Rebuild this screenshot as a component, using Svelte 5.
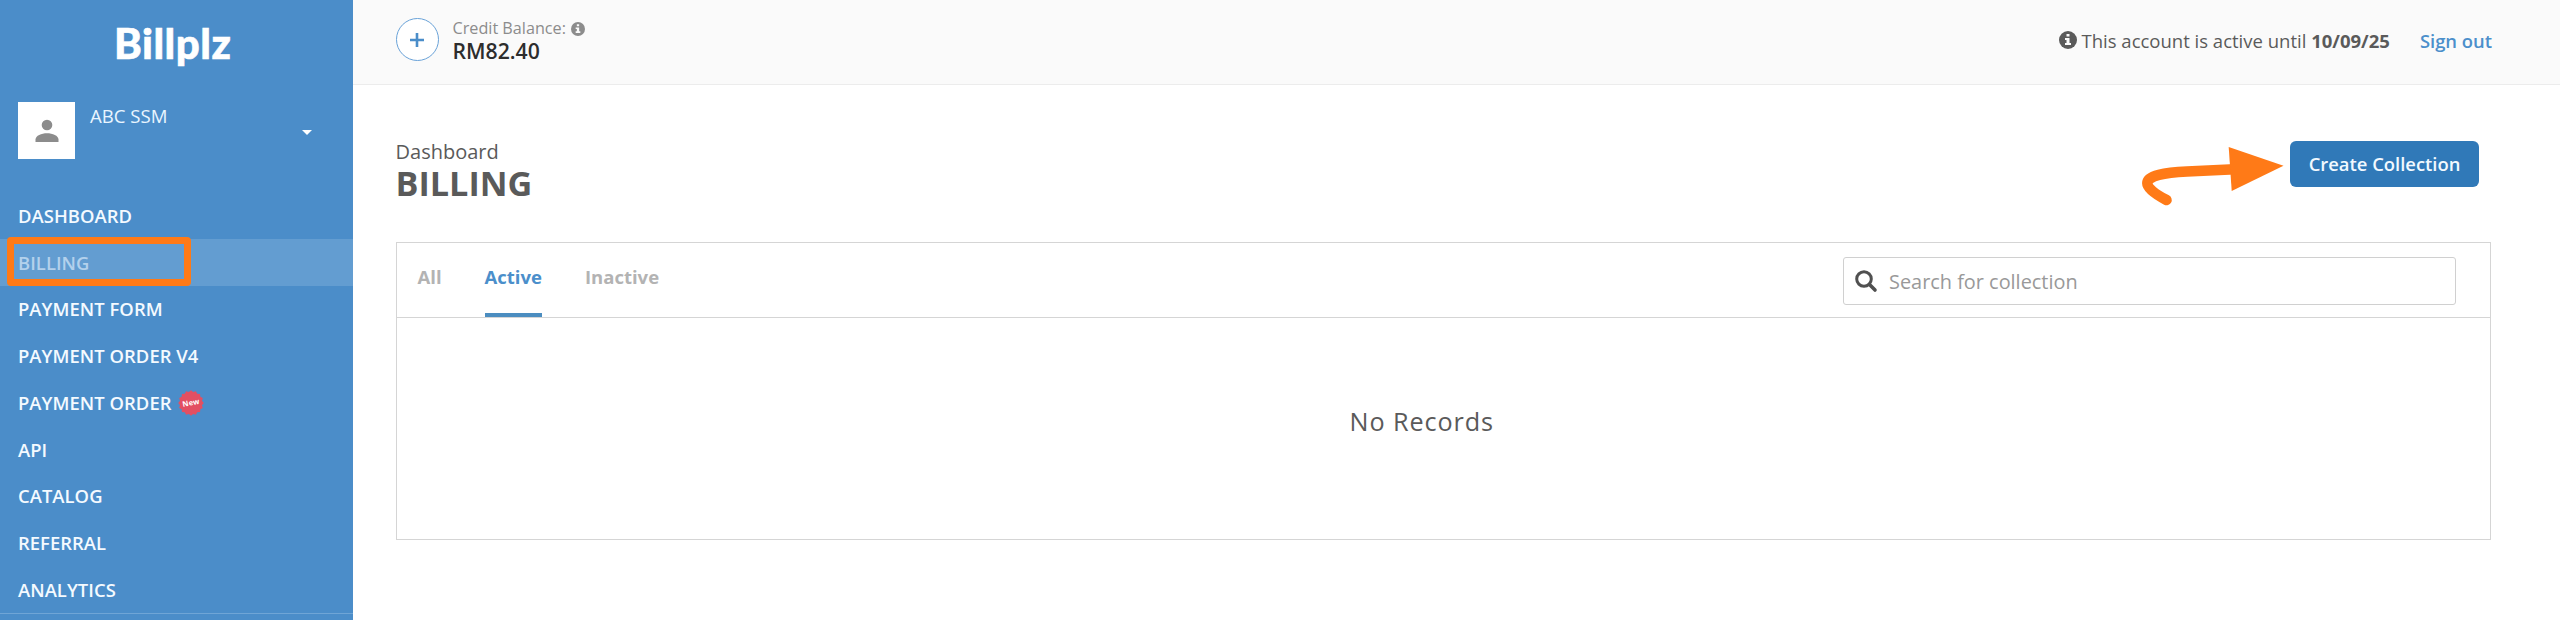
<script>
  const links = [
    { label: 'DASHBOARD' },
    { label: 'BILLING', active: true },
    { label: 'PAYMENT FORM' },
    { label: 'PAYMENT ORDER V4' },
    { label: 'PAYMENT ORDER', isNew: true },
    { label: 'API' },
    { label: 'CATALOG' },
    { label: 'REFERRAL' },
    { label: 'ANALYTICS' }
  ];
  const tabs = ['All', 'Active', 'Inactive'];
  let current = $state('Active');

  // Sixteen-toothed outline of the "New" seal
  const seal = Array.from({ length: 32 }, (_, i) => {
    const r = i % 2 ? 11.2 : 12.8;
    const a = (i * Math.PI) / 16;
    return `${(13 + r * Math.cos(a)).toFixed(2)},${(13 + r * Math.sin(a)).toFixed(2)}`;
  }).join(' ');
</script>

{#snippet info(size)}
  <svg class="info" width={size} height={size} viewBox="0 0 18 18">
    <circle cx="9" cy="9" r="9" fill="currentColor" />
    <path d="M7.500 3h3v2.400h-3zM6 7h4.500v5H12v2H6v-2h1.500V9H6z" fill="#fafafa" />
  </svg>
{/snippet}

<div class="app">
  <aside>
    <div class="logo">Billplz</div>
    <div class="profile">
      <div class="avatar">
        <svg width="24" height="24" viewBox="0 0 24 24" fill="#8c8c8c">
          <circle cx="12" cy="6" r="5.300" />
          <path d="M.5 23v-2.400C.5 16.500 6.500 14.200 12 14.200s11.500 2.300 11.500 6.400V23z" />
        </svg>
      </div>
      <span class="name">ABC SSM</span>
      <span class="caret"></span>
    </div>
    <nav>
      {#each links as link}
        <a href="#top" class:active={link.active}>
          <span>{link.label}</span>
          {#if link.isNew}
            <svg class="seal" width="26" height="26" viewBox="0 0 26 26">
              <polygon points={seal} fill="#e34f62" />
              <text x="13" y="15.400" text-anchor="middle" transform="rotate(-12 13 13)">New</text>
            </svg>
          {/if}
          {#if link.active}<i class="marker"></i>{/if}
        </a>
      {/each}
    </nav>
    <div class="rule"></div>
  </aside>

  <div class="content">
    <header>
      <button class="plus" aria-label="Add">
        <svg width="14" height="14" viewBox="0 0 14 14"><path d="M7 0v14M0 7h14" stroke="#4a8dc9" stroke-width="2.600" /></svg>
      </button>
      <div class="credit">
        <div class="credit-label"><span>Credit Balance:</span>{@render info(14)}</div>
        <div class="amount">RM82.40</div>
      </div>
      <div class="account">
        {@render info(18)}
        <span class="until">This account is active until <b>10/09/25</b></span>
      </div>
      <a class="signout" href="#top">Sign out</a>
    </header>

    <main>
      <div class="heading">
        <div class="titles">
          <div class="crumb">Dashboard</div>
          <h1>BILLING</h1>
        </div>
        <div class="action">
          <svg class="arrow" width="150" height="57" viewBox="0 0 150 57">
            <path d="M100 19.200L52 21.600C30 22.700 12.300 25.500 12.300 33.300C12.300 38 20 44 31.500 50" fill="none" stroke="#ff7a17" stroke-width="10.500" stroke-linecap="round" stroke-linejoin="round" />
            <path d="M93.700 -3L148.500 15.700L96.700 41z" fill="#ff7a17" />
          </svg>
          <button class="create">Create Collection</button>
        </div>
      </div>

      <section>
        <div class="bar">
          <div class="tabs">
            {#each tabs as tab}
              <button class:on={tab === current} onclick={() => (current = tab)}>{tab}</button>
            {/each}
          </div>
          <label class="search">
            <svg width="22" height="22" viewBox="0 0 22 22" fill="none" stroke="#505050">
              <circle cx="9" cy="9" r="7.300" stroke-width="3" />
              <path d="M14.500 14.500L20 20" stroke-width="3.600" stroke-linecap="round" />
            </svg>
            <input placeholder="Search for collection" />
          </label>
        </div>
        <div class="empty">No Records</div>
      </section>
    </main>
  </div>
</div>

<style>
  :global(body) { background: #fff; overflow: hidden; }
  * { box-sizing: border-box; }
  button { font: inherit; border: 0; padding: 0; background: none; letter-spacing: inherit; }
  a { text-decoration: none; }
  svg { display: block; flex: none; overflow: visible; }
  .app { display: flex; width: 2560px; height: 620px; overflow: hidden; font-family: 'Open Sans', sans-serif; color: #5a5a5a; }

  aside { width: 352.500px; flex: none; background: #4b8dc9; color: #fff; }
  .logo { height: 102px; padding: 14px 0 0 114px; font: 900 42px/58px Lato, sans-serif; letter-spacing: 0.5px; -webkit-text-stroke: 0.6px #fff; }
  .profile { display: flex; height: 90.500px; padding-left: 18px; }
  .avatar { width: 57px; height: 57px; background: #fff; display: flex; align-items: center; justify-content: center; }
  .name { margin-left: 15px; width: 212px; font-size: 18.600px; line-height: 28px; color: #e9f5ff; }
  .caret { width: 0; height: 0; margin-top: 28px; border: 5.500px solid transparent; border-top-color: #fff; border-bottom: 0; }
  nav a { position: relative; display: flex; align-items: center; height: 46.750px; padding: 0 0 1px 18px; font-size: 18.400px; letter-spacing: 0.05px; font-weight: 600; color: #f4faff; white-space: nowrap; }
  nav a.active { background: #639dd1; color: #b3d1ec; }
  .marker { position: absolute; left: 7px; top: -2px; width: 184px; height: 49px; border: 7px solid #ff7a17; border-radius: 4px; }
  .seal { margin: 1px 0 0 6px; }
  .seal text { font: 700 7.500px 'Open Sans', sans-serif; fill: #fff; }
  .rule { height: 1px; background: #6fa5d6; }

  .content { flex: 1; }
  header { display: flex; height: 85px; background: #fafafa; border-bottom: 1px solid #ececec; }
  .plus { width: 43px; height: 43px; margin: 18px 0 0 43px; border: 1.500px solid #69a2d8; border-radius: 50%; background: #fff; display: flex; align-items: center; justify-content: center; }
  .credit { margin: 18px 0 0 14px; }
  .credit-label { display: flex; align-items: center; gap: 5px; font-size: 16.200px; line-height: 21px; color: #8c8c8c; }
  .amount { font-size: 21.200px; line-height: 23px; font-weight: 600; color: #2d2d2d; }
  .account { display: flex; align-items: center; height: 81px; margin-left: auto; font-size: 18.500px; gap: 5px; }
  .account :global(.info) { margin-top: -2px; }
  .until b { font-weight: 700; }
  .signout { margin: 0 68px 0 30px; line-height: 81px; font-size: 18.400px; font-weight: 600; color: #4b8fcb; }

  main { padding: 0 69px 0 43px; }
  .heading { display: flex; justify-content: space-between; height: 157px; }
  .titles { padding-top: 54px; }
  .crumb { font-size: 20px; line-height: 26px; }
  h1 { margin: 0; font-size: 34.200px; line-height: 36px; font-weight: 700; }
  .action { display: flex; padding: 56px 12px 0 0; }
  .create { width: 189px; height: 46px; padding-bottom: 1px; border-radius: 6px; background: #3079b8; color: #f2f9ff; font-size: 18.400px; font-weight: 600; }
  .arrow { margin: 9px 5px 0 0; }
  section { height: 298px; border: 1.500px solid #d5d5d5; }
  .bar { display: flex; justify-content: space-between; height: 74.500px; border-bottom: 1.500px solid #d5d5d5; }
  .tabs { display: flex; gap: 43px; padding-left: 21px; }
  .tabs button { height: 73.500px; padding-bottom: 2.500px; border-bottom: 4px solid transparent; font-size: 18.500px; font-weight: 700; color: #b3b3b3; }
  .tabs .on { color: #4b8fcb; border-color: #4b8dc0; }
  .search { display: flex; align-items: center; width: 613px; height: 48px; margin: 14px 34px 0 0; padding-left: 11px; border: 1.500px solid #d0d0d0; border-radius: 3px; }
  input { flex: 1; border: 0; outline: 0; padding: 0; margin-left: 12px; background: none; font: 19.900px 'Open Sans', sans-serif; }
  input::placeholder { color: #999; }
  .empty { height: 220px; display: flex; align-items: center; justify-content: center; font-size: 25.200px; letter-spacing: 0.9px; padding: 0 43px 13px 0; }
</style>
